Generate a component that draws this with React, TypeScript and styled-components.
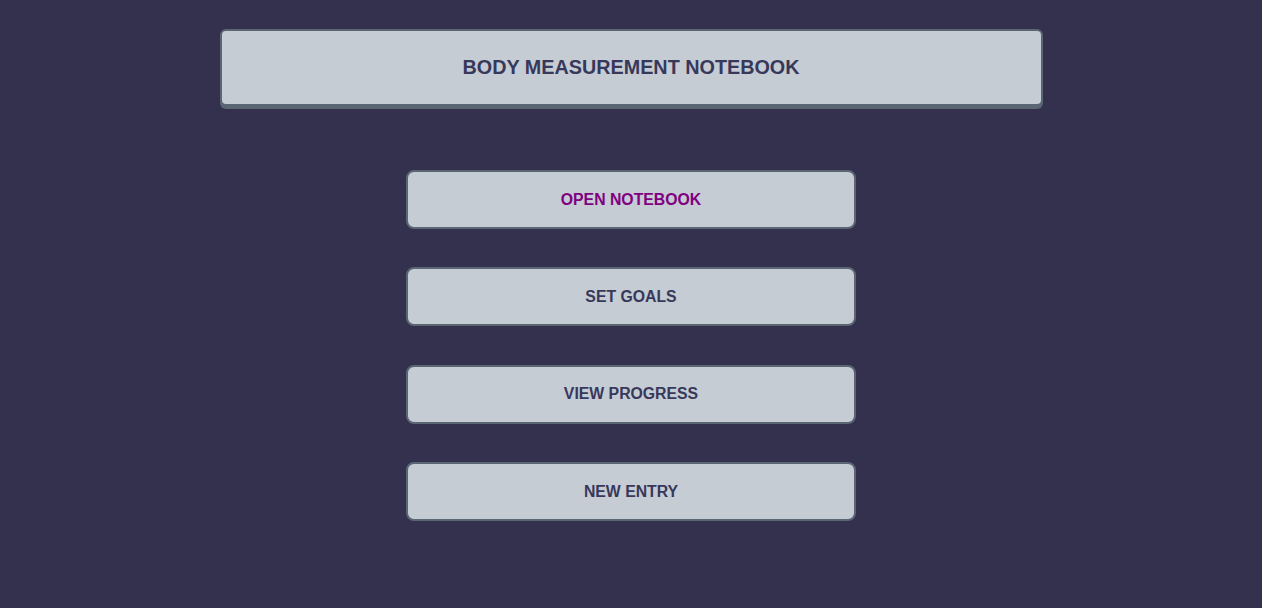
import styled, { createGlobalStyle } from "styled-components";

const GlobalStyle = createGlobalStyle`
  body {
    margin: 0;
    background: #33314d;
    font-family: "Liberation Sans", Arial, sans-serif;
  }
`;

const items = ["OPEN NOTEBOOK", "SET GOALS", "VIEW PROGRESS", "NEW ENTRY"];

const App = () => {
  return (
    <Page>
      <GlobalStyle />
      <Header>
        <Title>BODY MEASUREMENT NOTEBOOK</Title>
      </Header>
      <Menu>
        {items.map((label, i) => (
          <MenuButton key={label} $active={i === 0}>
            {label}
          </MenuButton>
        ))}
      </Menu>
    </Page>
  );
};

export default App;

const Page = styled.div`
  display: flex;
  flex-direction: column;
  align-items: center;
  padding-top: 29px;
  min-height: 608px;
  box-sizing: border-box;
`;

const Header = styled.header`
  width: 823px;
  height: 77px;
  box-sizing: border-box;
  background: #c5ccd4;
  border: 2px solid #5b6675;
  border-radius: 6px;
  box-shadow: 0 3px 0 #5b6675;
  display: flex;
  align-items: center;
  justify-content: center;
`;

const Title = styled.h1`
  margin: 0;
  font-size: 19.8px;
  font-weight: bold;
  color: #38385a;
`;

const Menu = styled.nav`
  display: flex;
  flex-direction: column;
  gap: 38.4px;
  margin-top: 64px;
`;

const MenuButton = styled.div<{ $active?: boolean }>`
  width: 450px;
  height: 59px;
  box-sizing: border-box;
  background: #c5ccd4;
  border: 2px solid #5b6675;
  border-radius: 8px;
  display: flex;
  align-items: center;
  justify-content: center;
  font-size: 15.8px;
  font-weight: bold;
  color: ${(p) => (p.$active ? "#800080" : "#38385a")};
  cursor: pointer;
`;
